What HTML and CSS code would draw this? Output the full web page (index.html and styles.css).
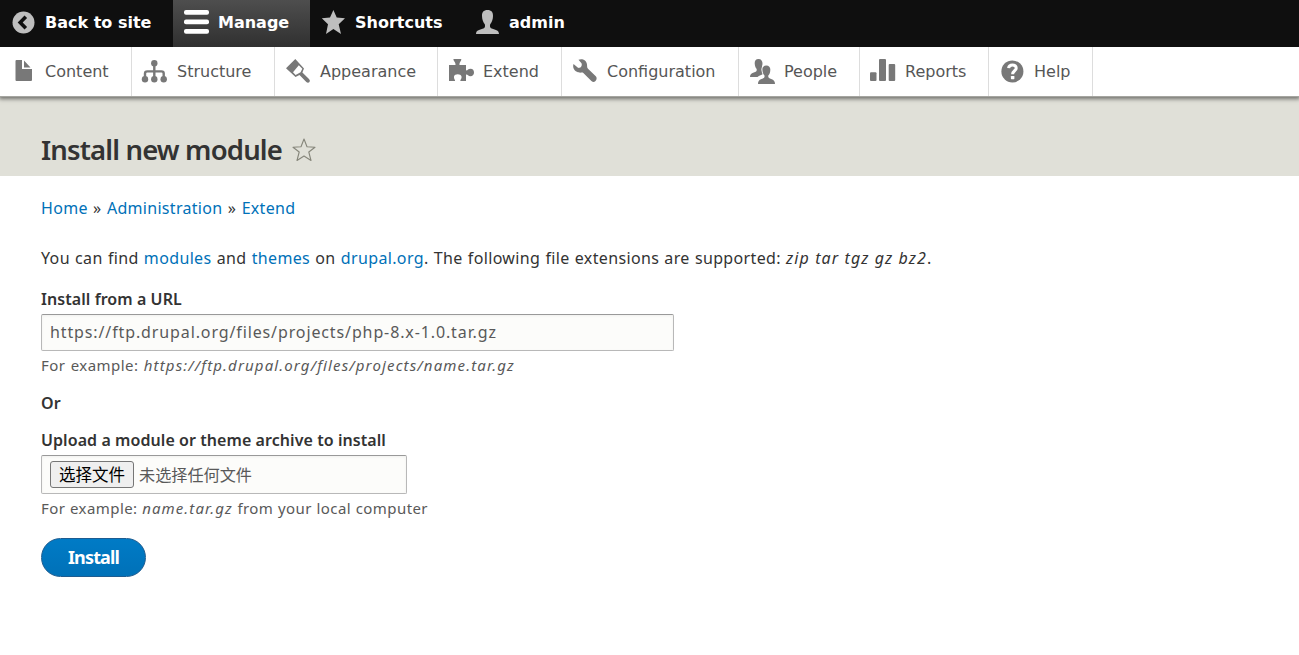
FILE: index.html
```html
<!DOCTYPE html>
<html lang="en">
<head>
<meta charset="utf-8">
<title>Install new module</title>
<link rel="stylesheet" href="styles.css">
</head>
<body>
<nav class="bar">
  <a class="bar-item back"><svg class="icon" viewBox="0 0 25 25"><circle cx="12.5" cy="12.5" r="11" fill="#bebebe"/><path d="M14.8 6.8L9.2 12.5L14.8 18.2" fill="none" stroke="#0f0f0f" stroke-width="3.6"/></svg><span>Back to site</span></a>
  <a class="bar-item manage"><svg class="icon" viewBox="0 0 25 25" fill="#fff"><rect y="0" width="25" height="4.700" rx="2"/><rect y="9.500" width="25" height="4.700" rx="2"/><rect y="19" width="25" height="4.700" rx="2"/></svg><span>Manage</span></a>
  <a class="bar-item shortcuts"><svg class="icon" viewBox="0 0 25 25" fill="#bebebe"><path d="M12.4 0L15.7 7.6L24 8.3L17.7 14.2L20 24L12.4 19L5 24L7 14.2L.8 8.3L9 7.6Z" /></svg><span>Shortcuts</span></a>
  <a class="bar-item user"><svg class="icon" viewBox="0 0 25 25" fill="#bebebe"><path d="M12.5 0C8.600 0 6.800 2.300 7 6C7.100 9.500 8 12 9.800 14.200C10.300 16 10 17.600 9 18.200C5 19.700 1 19.800 1 24H24C24 19.800 20 19.700 16 18.200C15 17.600 14.700 16 15.200 14.200C17 12 17.900 9.500 18 6C18.200 2.300 16.400 0 12.500 0Z"/></svg><span>admin</span></a>
</nav>
<nav class="tray">
  <a class="tab content"><svg class="icon" viewBox="0 0 25 25"><path d="M5.500 1H11V10H21V21Q21 22 20 22H5.500Q4.500 22 4.500 21V2Q4.500 1 5.500 1ZM13 1.500L19.500 8.500H13Z"/></svg><span>Content</span></a>
  <a class="tab structure"><svg class="icon" viewBox="0 0 25 25"><circle cx="11.300" cy="4.300" r="3.200"/><circle cx="2" cy="20.300" r="3.200"/><circle cx="11.300" cy="20.300" r="3.200"/><circle cx="20.700" cy="20.300" r="3.200"/><path d="M11.300 5V20M2 19V14.500Q2 12.400 4.300 12.400H18.400Q20.700 12.400 20.700 14.500V19" fill="none" stroke="#787878" stroke-width="2.400"/></svg><span>Structure</span></a>
  <a class="tab appearance"><svg class="icon" viewBox="0 0 25 25"><path fill-rule="evenodd" d="M9.300 0L0 9.300L9.500 18L13.500 16L20.300 22.900Q22 24.500 23.500 23Q24.500 21.500 23 20L16.400 13.500L18 9.500ZM12.800 6.200L16.300 9.700L14.600 13.200L9.600 16.100L7 13.200Z"/></svg><span>Appearance</span></a>
  <a class="tab extend"><svg class="icon" viewBox="0 0 25 25"><path d="M4.500 0H12.200C12.800 2 10.200 2.800 10.500 6H17V11.300C18.500 12 18.800 9.800 21.500 9.800C23.800 9.800 25 11.500 25 13.500S23.800 17.200 21.500 17.200C18.800 17.200 18.500 15 17 15.700V22H11.500C10.800 20.800 13 20 12.500 17.500C12 14.500 5.500 14.500 5 17.500C4.500 20 6.500 20.800 6 22H0V6H6.500C6.800 2.800 4 2 4.500 0Z"/></svg><span>Extend</span></a>
  <a class="tab configuration"><svg class="icon" viewBox="0 0 25 25"><path d="M5.500.8C9-.7 13.500 1 14 5.500C14.300 7.700 13.800 8.500 15 9.700L22.800 17.300C25.200 19.700 22 25 18.400 22L10.600 14.200C9 12.800 7 14.600 4 12.800C.8 11.500-.5 8 .5 5L5 8.800C7.300 9.500 9.600 7 8.500 4.200Z"/></svg><span>Configuration</span></a>
  <a class="tab people"><svg class="icon" viewBox="0 0 25 25"><path d="M8.500 0C5.800 0 4.500 2 4.700 4.500C4.900 7 5.500 8.600 6.700 10C7.100 12.500 5.800 12.700 3.800 13.500C1 14.500 0 15.500 0 18H7.500C9 16.300 12 16 13.500 14.500C11.500 11.500 11.800 7.500 12.500 5C12.700 2 11.200 0 8.500 0Z"/><path class="front" d="M16.300 6.500C13.500 6.500 12.200 8.500 12.400 11C12.600 13.500 13.200 15.100 14.500 16.500C14.900 19 13.500 19.200 11.500 20C8.800 21 8 22.500 8 25H25C25 22.500 24 21 21.200 20C19.200 19.200 17.900 19 18.300 16.500C19.600 15.100 20.200 13.500 20.300 11C20.500 8.500 19.100 6.500 16.300 6.500Z"/></svg><span>People</span></a>
  <a class="tab reports"><svg class="icon" viewBox="0 0 25 25"><rect x="-1" y="13.300" width="6.500" height="8.700" rx="1"/><rect x="8" y="0" width="7" height="22" rx="1"/><rect x="17.700" y="5" width="6.500" height="17" rx="1"/></svg><span>Reports</span></a>
  <a class="tab help"><svg class="icon" viewBox="0 0 25 25"><circle cx="12.400" cy="12.400" r="11"/><path d="M8.600 9.200C9 4.800 16.300 4.800 16.200 9.200C16.200 11.800 12.600 11.800 12.600 15.300" fill="none" stroke="#fff" stroke-width="3"/><rect x="10.900" y="17" width="3.500" height="3.200" rx=".6" fill="#fff"/></svg><span>Help</span></a>
</nav>
<header class="page-header">
  <h1>Install new module</h1>
  <svg class="star" viewBox="0 0 24 24"><path d="M12 1L15 8.800L23 9.300L16.800 14L19 22.500L12 18L5 22.500L7.200 14L1 9.300L9 8.800Z" fill="none" stroke="#85857a" stroke-width="1.100" stroke-linejoin="round"/></svg>
</header>
<main>
  <div class="breadcrumb"><a>Home</a> » <a>Administration</a> » <a>Extend</a></div>
  <p class="intro">You can find <a>modules</a> and <a>themes</a> on <a>drupal.org</a>. The following file extensions are supported: <em>zip tar tgz gz bz2</em>.</p>
  <div class="label">Install from a URL</div>
  <div class="field url">https://ftp.drupal.org/files/projects/php-8.x-1.0.tar.gz</div>
  <div class="hint">For example: <em>https://ftp.drupal.org/files/projects/name.tar.gz</em></div>
  <div class="label or">Or</div>
  <div class="label upload">Upload a module or theme archive to install</div>
  <div class="field file"><button class="choose">选择文件</button><span>未选择任何文件</span></div>
  <div class="hint local">For example: <em>name.tar.gz</em> from your local computer</div>
  <button class="install">Install</button>
</main>
</body>
</html>
```
FILE: styles.css
```css
* { box-sizing: border-box; }
body { margin: 0; background: #fff; color: #333; font: 16px/24px "Noto Sans", sans-serif; }
a { color: #0071b8; text-decoration: none; }
.bar { display: flex; height: 47px; background: #0f0f0f; }
.bar-item, .tab { display: flex; align-items: flex-start; gap: 9px; flex: none; padding-left: 11px; white-space: nowrap; }
.bar-item { color: #fff; padding-top: 10px; font: bold 16px/26px "DejaVu Sans", sans-serif; }
.icon { width: 25px; height: 25px; flex: none; overflow: visible; }
.back { width: 173px; }
.manage { width: 137px; background: linear-gradient(#4e4e4e, #303030); }
.shortcuts { width: 154px; }
.tray { position: relative; display: flex; height: 50px; background: #fff; border-bottom: 1px solid #a5a5a0; box-shadow: 0 1px 4px 1px rgba(0, 0, 0, .5); clip-path: inset(0 0 -12px); }
.tab { border-right: 1px solid #ddd; color: #565656; padding-top: 12px; font: 16px/26px "DejaVu Sans", sans-serif; }
.tab .icon { fill: #787878; }
.front { stroke: #fff; stroke-width: 2px; paint-order: stroke; }
.content { width: 132px; }
.structure { width: 143px; }
.appearance { width: 163px; }
.extend { width: 124px; }
.configuration { width: 177px; }
.people { width: 121px; }
.reports { width: 129px; }
.help { width: 104px; }
.page-header { display: flex; gap: 11px; height: 79px; padding: 35px 0 0 41px; background: #e0e0d8; }
h1 { margin: 0; font: 600 27.500px/36px "Noto Sans", sans-serif; letter-spacing: -.85px; }
.star { width: 24px; height: 24px; margin-top: 6px; margin-left: -1px; }
main { padding: 20px 41px; }
.breadcrumb { letter-spacing: .3px; word-spacing: .9px; }
.intro { margin: 26px 0 17px; letter-spacing: .35px; word-spacing: .7px; }
.intro em { letter-spacing: 1.1px; word-spacing: 0; }
.label { font-weight: 600; letter-spacing: .07px; }
.field { display: flex; align-items: center; border: 1px solid #b8b8b8; border-top-color: #999; border-radius: 2px; background: #fcfcfa; box-shadow: inset 0 1px 3px rgba(0, 0, 0, .05); color: #595959; padding: 0 0 2px 8px; margin-top: 3px; }
.url { width: 633px; height: 37px; letter-spacing: .88px; }
.hint { color: #595959; font-size: 15px; margin-top: 2px; letter-spacing: .43px; word-spacing: 1.1px; }
.hint em { letter-spacing: 1.140px; }
.local { word-spacing: .3px; }
.local em { letter-spacing: 1.1px; }
.or { margin-top: 14px; }
.upload { margin-top: 13px; }
.file { width: 366px; height: 39px; gap: 5px; padding-bottom: 1px; font: 16.150px/22px "Noto Sans CJK SC", sans-serif; }
.file span { padding-bottom: 1px; }
.choose { width: 84px; height: 27px; padding: 0; border: 1px solid #767676; border-radius: 3px; background: #efefef; color: #000; font: 16.500px/23px "Noto Sans CJK SC", sans-serif; }
.install { display: block; width: 105px; height: 39px; margin-top: 18px; padding: 0 0 1px; border: 1px solid #1e5c90; border-radius: 20px; background: linear-gradient(#007bc6, #0071b8); color: #fff; font: bold 18px/24px "Noto Sans", sans-serif; letter-spacing: -.85px; }
```
